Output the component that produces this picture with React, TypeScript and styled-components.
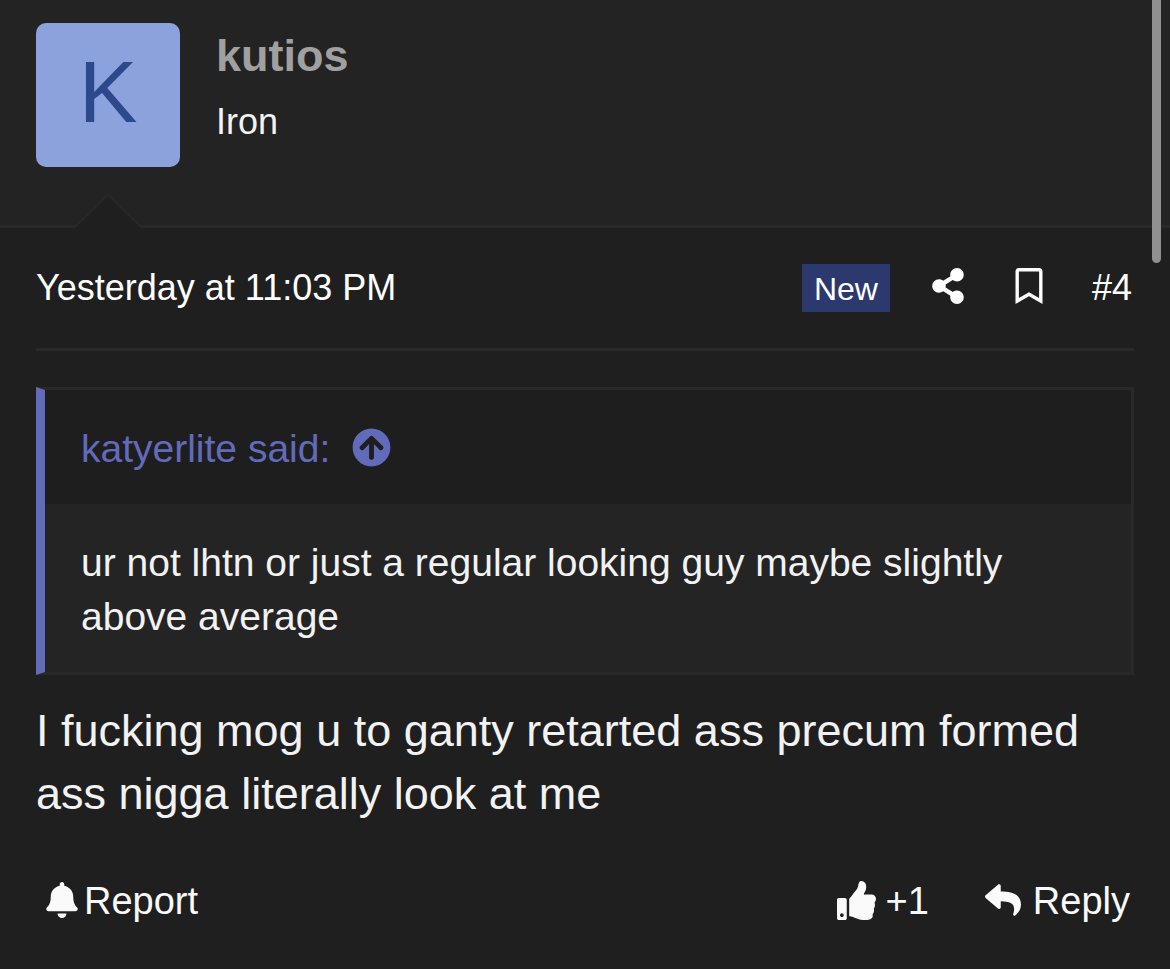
import React from 'react';
import styled, { createGlobalStyle } from 'styled-components';
import { FaShareAlt, FaRegBookmark, FaBell, FaThumbsUp, FaReply, FaArrowCircleUp } from 'react-icons/fa';

const GlobalStyle = createGlobalStyle`
  * { box-sizing: border-box; }
  body {
    margin: 0;
    background: #1f1f1f;
    color: #f2f2f2;
    font-family: "Liberation Sans", Arial, sans-serif;
    font-size: 38px;
  }
  a { color: inherit; text-decoration: none; }
  svg { display: block; flex: none; }
`;

const Post = styled.article`
  position: relative;
  min-height: 100vh;
`;

const Author = styled.header`
  position: relative;
  display: flex;
  gap: 36px;
  padding: 23px 36px 58px;
  background: #232323;
  border-bottom: 3px solid #292929;
`;

const Notch = styled.svg`
  position: absolute;
  left: 72px;
  bottom: -3px;
`;

const Avatar = styled.a`
  display: flex;
  align-items: center;
  justify-content: center;
  width: 144px;
  height: 144px;
  padding-bottom: 6px;
  border-radius: 10px;
  background: #8ca2dc;
  && { color: #2b498c; }
  font-size: 88px;
`;

const Identity = styled.div`
  display: flex;
  flex-direction: column;
  gap: 12px;
  padding-top: 5px;
`;

const UserName = styled.h4`
  margin: 0;
  color: #a0a0a0;
  font-size: 45px;
  line-height: 56px;
`;

const UserTitle = styled.div`
  font-size: 36px;
  line-height: 52px;
`;

const Content = styled.div`
  padding: 36px;
`;

const Meta = styled.div`
  display: flex;
  align-items: center;
  justify-content: space-between;
  height: 87px;
  padding-bottom: 36px;
  border-bottom: 3px solid #292929;
  color: #fff;
  font-size: 36px;
  line-height: 48px;
`;

const MetaTools = styled.div`
  display: flex;
  align-items: center;
  padding-right: 2px;
`;

const NewLabel = styled.span`
  padding: 1px 12px 0;
  margin-right: 40px;
  height: 48px;
  background: #2c396f;
  font-size: 32px;
`;

const IconButton = styled.button`
  padding: 0 0 4px;
  margin-right: 45px;
  border: 0;
  background: none;
  color: inherit;
  font: inherit;
`;

const Quote = styled.blockquote`
  margin: 36px 0 0;
  border: 3px solid #292929;
  border-left: 9px solid #626bba;
  background: #242424;
  font-size: 39px;
  line-height: 54px;
`;

const QuoteHead = styled.div`
  padding: 32px 36px 28px;
  background: #1e1e1e;
`;

const QuoteSource = styled.a`
  display: flex;
  align-items: center;
  gap: 22px;
  && { color: #626bba; }

  svg { margin-bottom: 4px; }
`;

const QuoteText = styled.p`
  margin: 0;
  padding: 32px 36px 28px;
`;

const Message = styled.p`
  margin: 24px 0 0;
  font-size: 45px;
  line-height: 63px;
`;

const ActionBar = styled.footer`
  display: flex;
  align-items: center;
  justify-content: space-between;
  margin-top: 48px;
  padding: 0 4px 0 8px;
  color: #fafafa;
  line-height: 56px;
`;

const ActionGroup = styled.div`
  display: flex;
  gap: 56px;
`;

const Action = styled.button<{ $gap: number }>`
  display: flex;
  align-items: center;
  gap: ${(p) => p.$gap}px;
  padding: 0;
  border: 0;
  background: none;
  color: inherit;
  font: inherit;

  svg { margin-bottom: 2px; }
`;

const ScrollThumb = styled.div`
  position: absolute;
  top: -9px;
  right: 9px;
  width: 9px;
  height: 272px;
  border-radius: 5px;
  background: #909090;
`;

export default function App() {
  return (
    <>
      <GlobalStyle />
      <Post>
        <Author>
          <Avatar href="#kutios">K</Avatar>
          <Identity>
            <UserName><a href="#kutios">kutios</a></UserName>
            <UserTitle>Iron</UserTitle>
          </Identity>
          <Notch width="72" height="36" viewBox="0 0 72 36" aria-hidden="true">
            <path d="M3 36 36 3l33 33z" fill="#1f1f1f" />
            <path d="M3 35 36 2.500l33 32.500" fill="none" stroke="#272727" strokeWidth="2" />
          </Notch>
        </Author>
        <Content>
          <Meta>
            <a href="#post-4"><time>Yesterday at 11:03 PM</time></a>
            <MetaTools>
              <NewLabel>New</NewLabel>
              <IconButton aria-label="Share"><FaShareAlt size={36} /></IconButton>
              <IconButton aria-label="Bookmark"><FaRegBookmark size={36} /></IconButton>
              <a href="#post-4">#4</a>
            </MetaTools>
          </Meta>
          <Quote>
            <QuoteHead>
              <QuoteSource href="#quoted">
                katyerlite said:
                <FaArrowCircleUp size={39} />
              </QuoteSource>
            </QuoteHead>
            <QuoteText>
              ur not lhtn or just a regular looking guy maybe slightly above average
            </QuoteText>
          </Quote>
          <Message>
            I fucking mog u to ganty retarted ass precum formed ass nigga literally look at me
          </Message>
          <ActionBar>
            <Action $gap={4}><FaBell size={36} />Report</Action>
            <ActionGroup>
              <Action $gap={10}><FaThumbsUp size={39} />+1</Action>
              <Action $gap={12}><FaReply size={36} />Reply</Action>
            </ActionGroup>
          </ActionBar>
        </Content>
        <ScrollThumb />
      </Post>
    </>
  );
}
